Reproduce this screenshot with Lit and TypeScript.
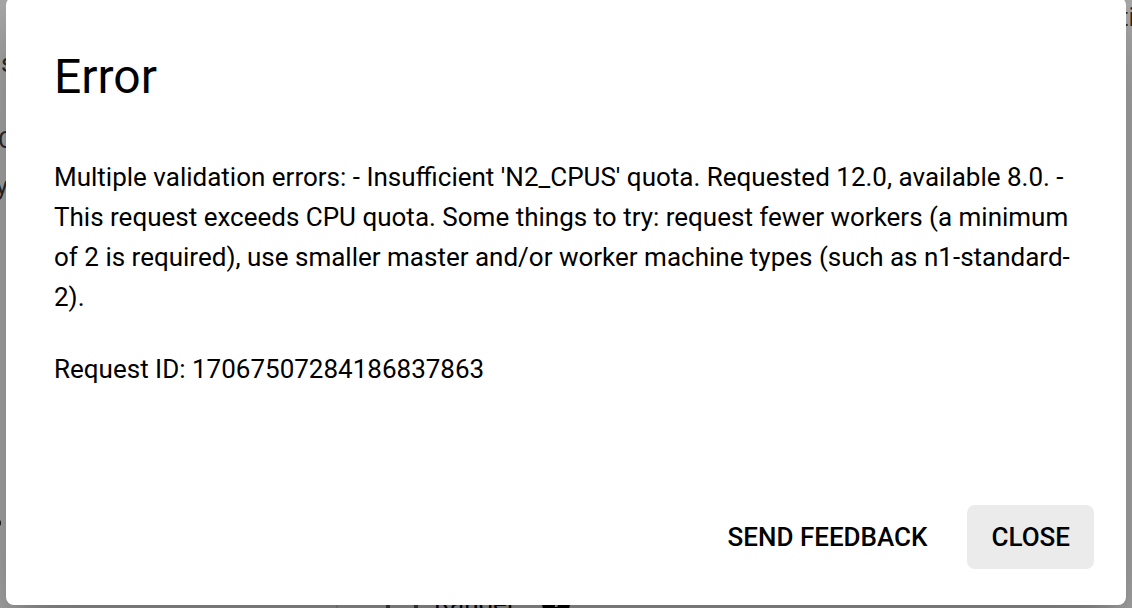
import { LitElement, html, css } from "lit";
import { customElement } from "lit/decorators.js";

@customElement("page-behind")
class PageBehind extends LitElement {
  static styles = css`
    :host {
      position: absolute;
      inset: 0;
      overflow: hidden;
      background: #fff;
      color: #3c4043;
      font: 26px/32px Roboto, sans-serif;
    }
    .piece {
      position: absolute;
      white-space: nowrap;
    }
    .s { left: 1px; top: 47px; }
    .c { left: -2px; top: 124px; font-size: 24px; }
    .y { right: calc(100% - 8px); top: 170px; }
    .dot { right: calc(100% - 1px); top: 519px; width: 8px; height: 8px; border-radius: 4px; background: #202124; }
    .ti { left: calc(100% - 12px); top: 1px; }
    .rule { left: 336px; top: 0; bottom: 0; width: 2px; background: #e0e0e0; }
    .option {
      left: 386px;
      top: 587px;
      display: flex;
      align-items: center;
      gap: 16px;
      color: #000;
    }
    .box { width: 24px; height: 24px; border: 4px solid #5f6368; }
    .help { width: 28px; height: 28px; margin-left: 10px; }
  `;

  render() {
    return html`
      <div class="piece rule"></div>
      <span class="piece s">s</span>
      <span class="piece c">C</span>
      <span class="piece y">y</span>
      <div class="piece dot"></div>
      <span class="piece ti">ti</span>
      <div class="piece option">
        <span class="box"></span>
        <span>Ranger</span>
        <svg class="help" viewBox="0 0 28 28" aria-hidden="true">
          <circle cx="14" cy="14" r="14" fill="#000" />
          <path d="M10 11a4 4 0 1 1 6 3.400c-1.500 .9-2 1.600-2 3.600" fill="none" stroke="#fff" stroke-width="2.600" />
          <circle cx="14" cy="21.500" r="1.600" fill="#fff" />
        </svg>
      </div>
    `;
  }
}

@customElement("app-root")
class AppRoot extends LitElement {
  static styles = css`
    :host {
      display: block;
      position: relative;
      min-height: 100vh;
      overflow: hidden;
      font-family: Roboto, sans-serif;
      color: #000;
    }
    .scrim {
      position: relative;
      box-sizing: border-box;
      min-height: 100vh;
      display: flex;
      padding: 0 6px 3px;
      background: rgba(0, 0, 0, 0.32);
    }
    .dialog {
      flex: 1;
      display: flex;
      flex-direction: column;
      margin-top: -3px;
      border-radius: 8px;
      background: #fff;
      box-shadow:
        0 22px 30px -14px rgba(0, 0, 0, 0.2),
        0 48px 76px 6px rgba(0, 0, 0, 0.14),
        0 18px 92px 16px rgba(0, 0, 0, 0.12);
    }
    h1 {
      margin: 0;
      padding: 48px 48px 0;
      font-size: 48px;
      line-height: 64px;
      font-weight: 400;
    }
    .content {
      flex: 1;
      padding: 48px 48px 0;
      font-size: 26px;
      line-height: 40px;
    }
    p {
      margin: 0 0 32px;
    }
    .actions {
      display: flex;
      justify-content: flex-end;
      gap: 16px;
      padding: 0 32px 36px;
    }
    button {
      height: 64px;
      padding: 0 24px;
      border: 0;
      border-radius: 8px;
      background: transparent;
      color: inherit;
      font: 500 26px/64px Roboto, sans-serif;
      text-transform: uppercase;
      cursor: pointer;
    }
    .close {
      background: #ebebeb;
    }
  `;

  render() {
    return html`
      <page-behind></page-behind>
      <div class="scrim">
        <section class="dialog" role="dialog" aria-modal="true" aria-labelledby="title">
          <h1 id="title">Error</h1>
          <div class="content">
            <p>
              Multiple validation errors: - Insufficient 'N2_CPUS' quota. Requested 12.0, available 8.0. -
              This request exceeds CPU quota. Some things to try: request fewer workers (a minimum of 2 is
              required), use smaller master and/or worker machine types (such as n1-standard-2).
            </p>
            <p>Request ID: 17067507284186837863</p>
          </div>
          <div class="actions">
            <button type="button">Send feedback</button>
            <button type="button" class="close">Close</button>
          </div>
        </section>
      </div>
    `;
  }
}
